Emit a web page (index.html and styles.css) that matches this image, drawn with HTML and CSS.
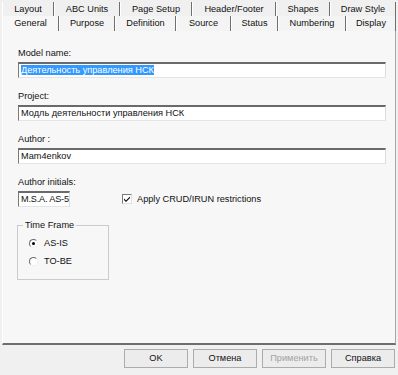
FILE: index.html
```html
<!DOCTYPE html>
<html lang="ru">
<head>
  <meta charset="UTF-8" />
  <title>Model Properties</title>
  <link rel="stylesheet" href="styles.css">
</head>
<body>
  <div class="dialog">
    <div class="tabs">
      <div class="tab-row row-back">
        <div class="tab">Layout</div>
        <div class="tab">ABC Units</div>
        <div class="tab">Page Setup</div>
        <div class="tab">Header/Footer</div>
        <div class="tab">Shapes</div>
        <div class="tab">Draw Style</div>
      </div>
      <div class="tab-row row-front">
        <div class="tab active">General</div>
        <div class="tab">Purpose</div>
        <div class="tab">Definition</div>
        <div class="tab">Source</div>
        <div class="tab">Status</div>
        <div class="tab">Numbering</div>
        <div class="tab">Display</div>
      </div>
    </div>

    <div class="panel">
      <div class="field">
        <div class="label">Model name:</div>
        <div class="textbox"><span class="sel">Деятельность управления НСК</span></div>
      </div>
      <div class="field">
        <div class="label">Project:</div>
        <div class="textbox">Модль деятельности управления НСК</div>
      </div>
      <div class="field">
        <div class="label">Author :</div>
        <div class="textbox">Mam4enkov</div>
      </div>
      <div class="field last">
        <div class="label">Author initials:</div>
        <div class="inline">
          <div class="textbox short">M.S.A. AS-5</div>
          <div class="check">
            <span class="box">
              <svg width="8" height="8" viewBox="0 0 8 8"><path d="M1 3.5 L3 5.5 L7 1.5 L7 3 L3 7 L1 5 Z" fill="#000"/></svg>
            </span>
            Apply CRUD/IRUN restrictions
          </div>
        </div>
      </div>

      <fieldset class="group">
        <legend>Time Frame</legend>
        <div class="radio"><span class="circle on"></span>AS-IS</div>
        <div class="radio"><span class="circle"></span>TO-BE</div>
      </fieldset>
    </div>

    <div class="footer">
      <div class="btn">OK</div>
      <div class="btn">Отмена</div>
      <div class="btn disabled">Применить</div>
      <div class="btn">Справка</div>
    </div>
  </div>
</body>
</html>
```

FILE: styles.css
```css
* {
  margin: 0;
  padding: 0;
  box-sizing: border-box;
}

body {
  background: #f0f0f0;
  font-family: "Liberation Sans", Arial, sans-serif;
  font-size: 9.2px;
  color: #111;
}

.dialog {
  width: 398px;
  height: 375px;
  display: flex;
  flex-direction: column;
}

/* tabs */
.tabs {
  padding: 0 2px;
  height: 31px;
}

.tab-row {
  display: grid;
}

.row-back {
  grid-template-columns: 52px 66px 72px 84px 54px 66px;
  height: 16px;
  padding-top: 2px;
}

.row-front {
  grid-template-columns: 57px 56px 61px 55px 47px 68px 50px;
  height: 15px;
  background: #f4f4f4;
}

.tab {
  text-align: center;
  line-height: 14px;
  border-right: 1px solid #6f6f6f;
  border-left: 1px solid #fff;
  white-space: nowrap;
}

.tab.active {
  background: #f7f7f7;
}

/* page */
.panel {
  height: 314px;
  margin: 0 2px;
  padding: 16px 9px 0 15px;
  background: #f7f7f7;
  border-left: 1px solid #fff;
  border-right: 1px solid #a8a8a8;
  border-bottom: 2px solid #6e6e6e;
}

.field {
  margin-bottom: 12px;
}

.field.last {
  margin-bottom: 0;
}

.label {
  line-height: 12px;
  margin-bottom: 3px;
}

.textbox {
  height: 16px;
  line-height: 13px;
  padding: 0 2px;
  background: #fff;
  border-top: 2px solid #6a6a6a;
  border-left: 1px solid #7a7a7a;
  border-right: 1px solid #dcdcdc;
  border-bottom: 1px solid #e4e4e4;
  white-space: nowrap;
  overflow: hidden;
}

.textbox.short {
  width: 52px;
  letter-spacing: -0.2px;
}

.sel {
  background: #3399ff;
  color: #fff;
}

.inline {
  display: flex;
  align-items: center;
}

.check {
  display: flex;
  align-items: center;
  gap: 5px;
  margin-left: 52px;
}

.box {
  width: 10px;
  height: 10px;
  background: #fff;
  border-top: 1px solid #7a7a7a;
  border-left: 1px solid #7a7a7a;
  border-right: 1px solid #e0e0e0;
  border-bottom: 1px solid #e0e0e0;
  display: flex;
  align-items: center;
  justify-content: center;
}

.group {
  width: 92px;
  margin: 13px 0 0 -1px;
  padding: 5px 0 11px 11px;
  border: 1px solid #cbcbcb;
}

.group legend {
  margin-left: -6px;
  padding: 0 2px;
  line-height: 11px;
}

.radio {
  display: flex;
  align-items: center;
  gap: 6px;
  height: 14px;
  margin-bottom: 4px;
}

.radio:last-child {
  margin-bottom: 0;
}

.circle {
  width: 9px;
  height: 9px;
  border-radius: 50%;
  background: #fff;
  border: 1px solid;
  border-color: #6a6a6a #f0f0f0 #f0f0f0 #6a6a6a;
  display: flex;
  align-items: center;
  justify-content: center;
}

.circle.on::after {
  content: "";
  width: 3px;
  height: 3px;
  border-radius: 50%;
  background: #000;
}

/* buttons */
.footer {
  display: flex;
  justify-content: flex-end;
  gap: 5px;
  padding: 4px 3px 0 0;
}

.btn {
  width: 64px;
  height: 19px;
  line-height: 17px;
  text-align: center;
  background: #ececec;
  border: 1px solid #acacac;
}

.btn.disabled {
  color: #a2a2a2;
}
```
